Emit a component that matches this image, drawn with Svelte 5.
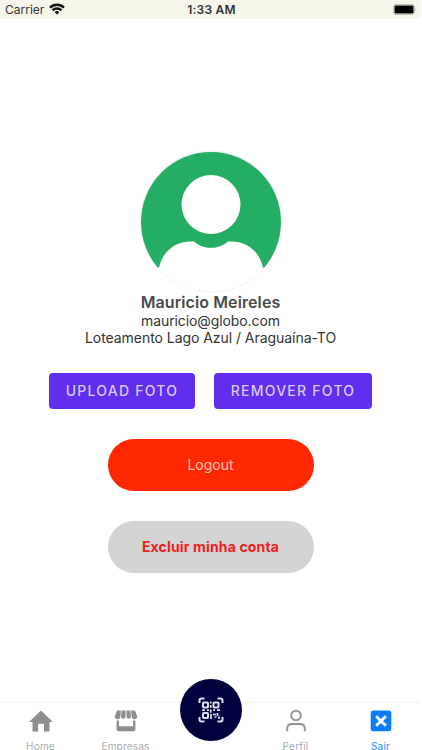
<script>
  const tabs = [
    { id: 'home', label: 'Home' },
    { id: 'shop', label: 'Empresas' },
    { id: 'scan', label: '' },
    { id: 'user', label: 'Perfil' },
    { id: 'exit', label: 'Sair' }
  ];
</script>

<div class="screen">
  <header class="status">
    <div class="carrier">
      <span>Carrier</span>
      <svg width="16" height="12" viewBox="0 0 16 12" fill="none" stroke="#111" stroke-width="2.4">
        <path d="M1 4.600a10 10 0 0 1 14 0" />
        <path d="M3.600 7.300a6.200 6.200 0 0 1 8.800 0" />
        <path d="M8 11.600 5.600 9.200a3.400 3.400 0 0 1 4.800 0z" fill="#111" stroke="none" />
      </svg>
    </div>
    <strong class="time">1:33 AM</strong>
    <svg class="battery" width="25" height="11" viewBox="0 0 25 11">
      <rect x=".5" y=".5" width="21" height="10" rx="2.5" fill="none" stroke="#c4c3b9" />
      <rect x="1.500" y="1.500" width="19" height="8" rx="1.200" fill="#000" />
      <path d="M22.500 3.700q1.700 1.800 0 3.600z" fill="#aaa99f" />
    </svg>
  </header>

  <main>
    <svg class="avatar" width="144" height="144" viewBox="0 0 144 144">
      <defs>
        <clipPath id="disc"><circle cx="72" cy="72" r="70" /></clipPath>
      </defs>
      <circle cx="72" cy="71.500" r="70.300" fill="#fff" stroke="#f1f2fa" stroke-width="1.400" />
      <g clip-path="url(#disc)">
        <path d="M0 0h144v117.500H0z" fill="#24ae63" />
        <circle cx="72" cy="54.500" r="29.500" fill="#fff" />
        <path d="M20 118c3-16 16-26.500 31-26.500h4c5 4 10 6.300 17 6.300s12-2.300 17-6.300h4c15 0 28 10.500 31 26.500v22H20z" fill="#fff" />
      </g>
    </svg>
    <h1>Mauricio Meireles</h1>
    <p class="email">mauricio@globo.com</p>
    <p class="address">Loteamento Lago Azul / Araguaína-TO</p>

    <div class="photo-actions">
      <button class="upload">UPLOAD FOTO</button>
      <button class="remove">REMOVER FOTO</button>
    </div>
    <button class="pill logout">Logout</button>
    <button class="pill delete">Excluir minha conta</button>
  </main>

  <nav>
    {#each tabs as tab (tab.id)}
      <div class="tab {tab.id}">
        {#if tab.id === 'home'}
          <svg width="24" height="24" viewBox="0 0 24 24" fill="#8e8e8f">
            <path d="M12 1.400 23.200 12.200q.6.800-.4.800H20.500v8.700q0 .8-.8.800H15v-6.800q0-.9-.9-.9H10q-.9 0-.9.900v6.800H4.300q-.8 0-.8-.8V13H1.200q-1 0-.4-.8z" />
          </svg>
        {:else if tab.id === 'shop'}
          <svg width="24" height="24" viewBox="0 0 24 24" fill="#8e8e8f">
            <path d="M3 1.500h4L6.300 7.500a2.700 2.700 0 0 1-5.500 0zM7.700 1.500h3.800v6a2.200 2.200 0 0 1-4.500 0zM12.500 1.500h3.800l.7 6a2.200 2.200 0 0 1-4.500 0zM17 1.500h4l2.200 6a2.700 2.700 0 0 1-5.500 0z" />
            <path d="M2.600 11.500H5v5.800h14v-5.800h2.400v8.700q0 2-2 2H4.600q-2 0-2-2z" />
          </svg>
        {:else if tab.id === 'scan'}
          <div class="scan-button">
            <svg width="28" height="28" viewBox="0 0 28 28" fill="none" stroke="#dedeee" stroke-width="2">
              <path d="M2.500 7V4.500q0-2 2-2h3M20.500 2.500h3q2 0 2 2V7M25.500 21v2.500q0 2-2 2h-3M7.500 25.500h-3q-2 0-2-2V21" />
              <rect x="6" y="6.500" width="5" height="5" rx=".8" />
              <rect x="16.500" y="6.500" width="5" height="5" rx=".8" />
              <rect x="6" y="17" width="5" height="5" rx=".8" />
              <path d="M13.700 5.500v2M13.700 9v3M5 14.200h3M10 14.200h2M13.700 13.500v3.300M16 14.200h2M20 14.200h3M14 18v5M16 18.500h3M20.500 17v3M17.500 21h2M22 20.500v2.500" stroke-width="1.700" />
            </svg>
          </div>
        {:else if tab.id === 'user'}
          <svg width="24" height="24" viewBox="0 0 24 24" fill="none" stroke="#929293" stroke-width="1.900">
            <circle cx="12" cy="6.500" r="4.800" />
            <path d="M3.200 22.300v-2.500q0-4.800 4.800-4.800h8q4.800 0 4.800 4.800v2.500" />
          </svg>
        {:else}
          <svg width="24" height="24" viewBox="0 0 24 24">
            <rect x="1.700" y="1.500" width="20.600" height="20.800" rx="2.500" fill="#087eff" />
            <path d="m7.200 7.200 9.600 9.600m0-9.600-9.600 9.600" stroke="#fff" stroke-width="2.900" />
          </svg>
        {/if}
        {#if tab.label}<span>{tab.label}</span>{/if}
      </div>
    {/each}
  </nav>
</div>

<style>
  :global(body) { background: #fff; overflow: hidden; }
  .screen {
    width: 421px;
    height: 750px;
    display: flex;
    flex-direction: column;
    overflow: hidden;
    background: #fff;
    font-family: Inter, "Liberation Sans", sans-serif;
  }
  .status {
    height: 19px;
    flex: none;
    display: grid;
    grid-template-columns: 1fr auto 1fr;
    align-items: center;
    padding: 0 3px 1px 5px;
    box-sizing: border-box;
    background: #f7f6ea;
    color: #333;
    font-size: 12px;
  }
  .carrier { display: flex; align-items: center; gap: 5px; }
  .time { font-weight: 600; font-size: 12px; letter-spacing: .2px; }
  .battery { justify-self: end; }
  main {
    flex: 1;
    display: flex;
    flex-direction: column;
    align-items: center;
    padding-top: 130.500px;
  }
  .avatar { display: block; flex: none; }
  h1, p { margin: 0; white-space: nowrap; color: #333; }
  h1 {
    font-size: 16px;
    line-height: 20px;
    font-weight: 600;
    letter-spacing: .1px;
    margin-top: -2px;
    color: #4a4a4c;
  }
  p { font-size: 14px; line-height: 17.500px; }
  .email { letter-spacing: -.1px; }
  .address { letter-spacing: -.05px; }
  .photo-actions { display: flex; gap: 19px; margin-top: 26px; }
  button { border: 0; padding: 0; font-family: inherit; white-space: nowrap; }
  .photo-actions button {
    height: 36px;
    border-radius: 4px;
    background: #612eee;
    color: #d9c9fc;
    font-size: 14px;
    font-weight: 500;
    letter-spacing: 1.250px;
  }
  .upload { width: 146px; }
  .remove { width: 158px; }
  .pill { width: 206px; height: 52px; border-radius: 26px; font-size: 14px; }
  .logout { margin-top: 30px; background: #ff2800; color: #ffc0b5; }
  .delete { margin-top: 30px; background: #d4d4d4; color: #f02020; font-weight: 700; letter-spacing: .15px; }
  nav {
    height: 47px;
    flex: none;
    display: flex;
    margin: 0 -2px;
    border-top: 1px solid #f0f0f0;
  }
  .tab {
    flex: 1;
    display: flex;
    flex-direction: column;
    align-items: center;
    padding-top: 6px;
    color: #aaa;
    font-size: 10px;
    line-height: 12px;
  }
  .tab > svg { flex: none; }
  .tab span { margin-top: 7px; letter-spacing: .2px; }
  .exit { color: #278cff; }
  .scan { padding: 0; }
  .scan-button {
    width: 62px;
    height: 62px;
    flex: none;
    margin-top: -24px;
    border-radius: 50%;
    background: #01013d;
    display: grid;
    place-items: center;
  }
</style>
